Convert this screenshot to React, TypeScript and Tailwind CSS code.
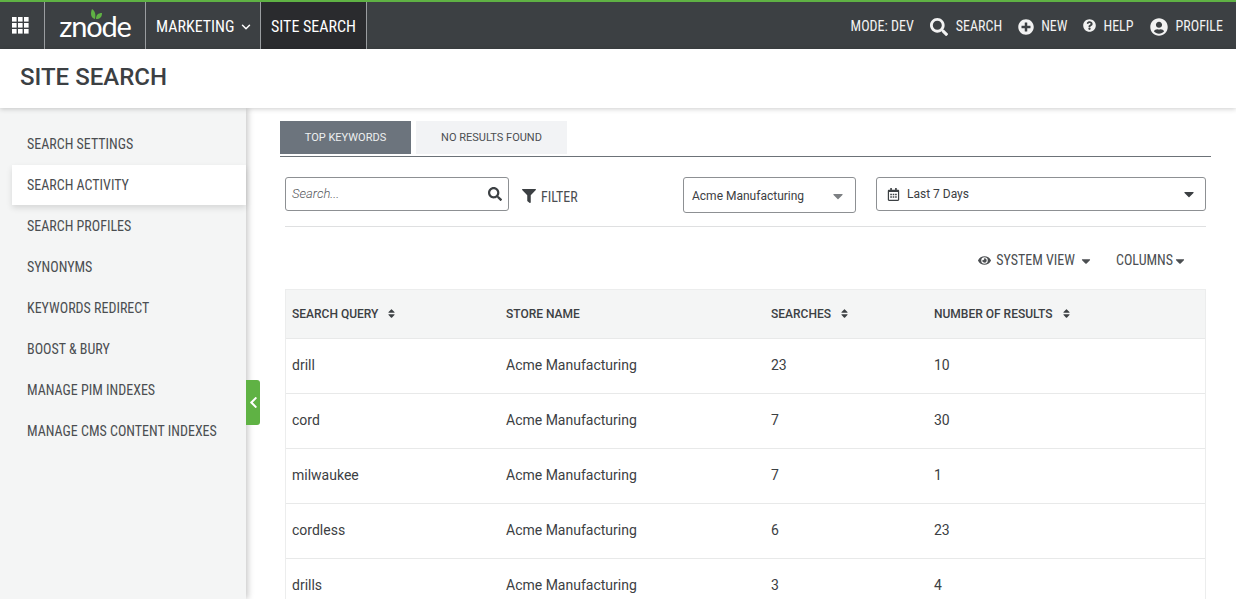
import { ChevronDown } from 'lucide-react';
import { FaCaretDown, FaChevronLeft, FaEye, FaFilter, FaQuestionCircle, FaPlusCircle, FaUserCircle, FaSearch, FaSort, FaRegCalendarAlt } from 'react-icons/fa';

const menu = [
  'SEARCH SETTINGS',
  'SEARCH ACTIVITY',
  'SEARCH PROFILES',
  'SYNONYMS',
  'KEYWORDS REDIRECT',
  'BOOST & BURY',
  'MANAGE PIM INDEXES',
  'MANAGE CMS CONTENT INDEXES',
];

const rows = [
  ['drill', 'Acme Manufacturing', '23', '10'],
  ['cord', 'Acme Manufacturing', '7', '30'],
  ['milwaukee', 'Acme Manufacturing', '7', '1'],
  ['cordless', 'Acme Manufacturing', '6', '23'],
  ['drills', 'Acme Manufacturing', '3', '4'],
];

// ── Top bar ──────────────────────────────────────────────────────────────────
function GridIcon() {
  return (
    <svg width="17" height="17" viewBox="0 0 17 17" fill="#fff">
      {[0, 6, 12].map(y =>
        [0, 6, 12].map(x => <rect key={`${x}-${y}`} x={x} y={y} width="4.6" height="4.6" />),
      )}
    </svg>
  );
}

function Logo() {
  return (
    <div className="relative flex items-center text-[29px] leading-none font-normal tracking-[-1.2px] text-white [font-family:Lato,sans-serif]">
      zn
      <span className="relative">
        o
        <svg className="absolute left-[3px] top-[-3px]" width="14" height="12" viewBox="0 0 14 12" fill="#5fb244">
          <path d="M6 11C2 10 1 6 3 1c3 2 4 5 3 10zM7 11c0-4 2-6 6-6 0 4-2 6-6 6z" />
        </svg>
      </span>
      de
    </div>
  );
}

function TopBar() {
  return (
    <header className="flex h-[49px] shrink-0 border-t-2 border-[#5fb244] bg-[#3c4043] text-white">
      <div className="flex w-[45px] items-center justify-center border-r border-[#9a9da0] pr-[4px]">
        <GridIcon />
      </div>
      <div className="flex w-[101px] items-center justify-center border-r border-[#9a9da0]">
        <Logo />
      </div>
      <div className="flex w-[115px] items-center gap-[5px] border-r border-[#9a9da0] pt-[2px] pl-[10px] text-[16px] [font-stretch:87%]">
        MARKETING
        <ChevronDown size={14} strokeWidth={2.5} />
      </div>
      <div className="flex w-[106px] items-center justify-center border-r border-[#9a9da0] bg-[#2a2b2e] pt-[2px] text-[16px] [font-stretch:87%]">
        SITE SEARCH
      </div>
      <div className="ml-auto flex items-center pt-[2px] pr-[13px] text-[14px] text-[#f2f2f2] [font-stretch:87%]">
        <span className="mr-[16px]">MODE: DEV</span>
        <FaSearch size={18} className="mr-[8px]" />
        <span className="mr-[16px]">SEARCH</span>
        <FaPlusCircle size={16} className="mr-[7px]" />
        <span className="mr-[16px]">NEW</span>
        <FaQuestionCircle size={13} className="mr-[7px] mb-[3px]" />
        <span className="mr-[16px]">HELP</span>
        <FaUserCircle size={18} className="mr-[8px]" />
        <span>PROFILE</span>
      </div>
    </header>
  );
}

// ── Sidebar ──────────────────────────────────────────────────────────────────
function Sidebar() {
  return (
    <aside className="relative z-10 w-[246px] shrink-0 bg-[#f4f5f5] pt-[16px] pl-[12px] shadow-[2px_0_6px_rgba(0,0,0,0.22)]">
      {menu.map(item => (
        <div
          key={item}
          className={`mb-[1px] flex h-[40px] items-center pt-[1px] pl-[15px] text-[14px] text-[#4b4e51] [font-stretch:87%] ${
            item === 'SEARCH ACTIVITY' ? 'bg-white shadow-[0_3px_6px_rgba(0,0,0,0.12)]' : ''
          }`}
        >
          {item}
        </div>
      ))}
      <button className="absolute left-[246px] top-[272px] flex h-[45px] w-[14px] items-center justify-center rounded-r-[3px] bg-[#5fb244] text-white">
        <FaChevronLeft size={13} />
      </button>
    </aside>
  );
}

// ── Main content ─────────────────────────────────────────────────────────────
function Toolbar() {
  return (
    <div className="mx-[5px] flex h-[70px] items-start border-b border-[#dfe0e1] pt-[20px]">
      <div className="flex h-[34px] w-[224px] items-center justify-between rounded-[3px] border border-[#8d9093] px-[6px]">
        <span className="text-[13px] font-light text-[#55585b] italic">Search...</span>
        <FaSearch size={14} className="text-[#3c4043]" />
      </div>
      <div className="mt-[10px] ml-[13px] flex w-[161px] items-center gap-[5px] text-[14px] text-[#4b4e51] [font-stretch:87%]">
        <FaFilter size={14} className="mb-[3px] text-[#3c4043]" />
        FILTER
      </div>
      <div className="flex h-[36px] w-[173px] items-center justify-between rounded-[3px] border border-[#8d9093] pt-[1px] pr-[9px] pl-[8px] text-[12px] text-[#3c4043]">
        Acme Manufacturing
        <FaCaretDown size={16} className="text-[#7d8083]" />
      </div>
      <div className="ml-[20px] flex h-[34px] flex-1 items-center rounded-[3px] border border-[#8d9093] pr-[8px] pl-[10px] text-[12px] text-[#3c4043]">
        <FaRegCalendarAlt size={13} className="mr-[7px]" />
        Last 7 Days
        <FaCaretDown size={16} className="ml-auto" />
      </div>
    </div>
  );
}

function DataTable() {
  return (
    <div className="mx-[5px] mt-[7px] border border-b-0 border-[#eceded]">
      <div className="grid h-[49px] grid-cols-[214px_265px_163px_1fr] items-center border-b border-[#e8e9e9] bg-[#f4f5f5] pl-[6px] text-[12px] font-medium text-[#3c4043]">
        <span className="flex items-center gap-[8px]">SEARCH QUERY <FaSort size={11} className="mb-[2px]" /></span>
        <span>STORE NAME</span>
        <span className="flex items-center gap-[8px]">SEARCHES <FaSort size={11} className="mb-[2px]" /></span>
        <span className="flex items-center gap-[8px]">NUMBER OF RESULTS <FaSort size={11} className="mb-[2px]" /></span>
      </div>
      {rows.map(row => (
        <div
          key={row[0]}
          className="grid h-[55px] grid-cols-[214px_265px_163px_1fr] items-center border-b border-[#e8e9e9] pb-[2px] pl-[6px] text-[14px] text-[#3c4043]"
        >
          {row.map((cell, i) => (
            <span key={i}>{cell}</span>
          ))}
        </div>
      ))}
    </div>
  );
}

function Content() {
  return (
    <main className="flex-1 pt-[13px] pr-[25px] pl-[34px]">
      <div className="flex gap-[5px] border-b border-[#6c7278] pb-[2px] text-[11px]">
        <div className="flex h-[33px] w-[131px] items-center justify-center bg-[#6c747d] pt-[1px] text-[#eef0f1]">TOP KEYWORDS</div>
        <div className="flex h-[33px] w-[151px] items-center justify-center bg-[#f2f3f5] pt-[1px] text-[#4b4e51]">NO RESULTS FOUND</div>
      </div>
      <Toolbar />
      <div className="mx-[5px] flex h-[55px] items-center justify-end pt-[12px] pr-[19px] text-[14px] text-[#4b4e51] [font-stretch:87%]">
        <FaEye size={13} className="mr-[5px]" />
        SYSTEM VIEW
        <FaCaretDown size={14} className="mr-[23px] ml-[4px]" />
        COLUMNS
        <FaCaretDown size={14} />
      </div>
      <DataTable />
    </main>
  );
}

export default function App() {
  return (
    <div className="flex h-[599px] flex-col overflow-hidden bg-white [font-family:Roboto,sans-serif]">
      <TopBar />
      <div className="relative z-20 flex h-[59px] shrink-0 items-center bg-white pb-[4px] pl-[20px] text-[24px] font-medium text-[#3c4043] shadow-[0_1px_5px_rgba(0,0,0,0.2)]">
        SITE SEARCH
      </div>
      <div className="flex flex-1 overflow-hidden">
        <Sidebar />
        <Content />
      </div>
    </div>
  );
}
